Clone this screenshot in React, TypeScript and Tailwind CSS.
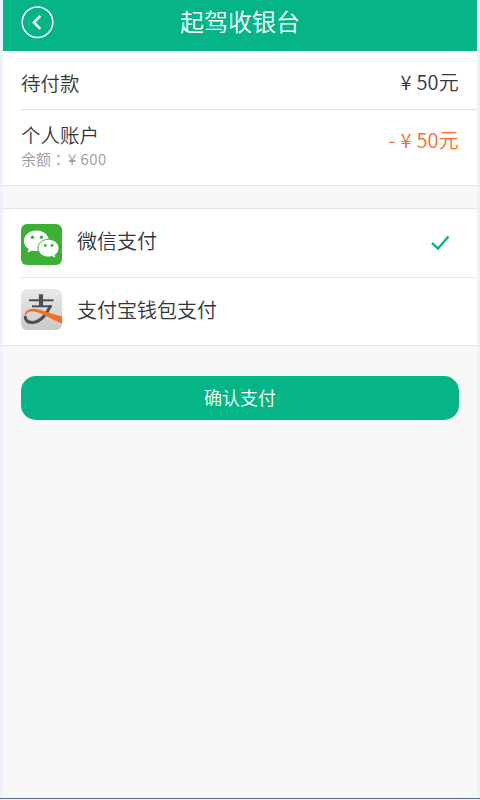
import React, { useState } from 'react';

const methods = [
  { id: 'wechat', label: '微信支付', Icon: WechatIcon },
  { id: 'alipay', label: '支付宝钱包支付', Icon: AlipayIcon },
];

function BackIcon() {
  return (
    <svg width="34" height="34" viewBox="0 0 34 34" fill="none" stroke="white">
      <circle cx="16.5" cy="17.2" r="15.3" strokeWidth="1.5" />
      <path d="M19.3 11 13 17.4 19.3 23.8" strokeWidth="2.5" />
    </svg>
  );
}

function WechatIcon() {
  return (
    <svg width="41" height="41" viewBox="0 0 41 41">
      <rect width="41" height="41" rx="6" fill="#3cb035" />
      <path
        d="M15.5 6.5C8.6 6.5 3 11.1 3 16.9c0 3.3 1.8 6.1 4.7 8L6.6 28.6l4.5-2.2c1.4.4 2.9.7 4.4.7 6.9 0 12.4-4.6 12.4-10.3S22.4 6.5 15.5 6.5z"
        fill="white"
      />
      <path
        d="M27.4 15.3c-5.8 0-10.5 4-10.5 8.9s4.7 8.9 10.5 8.9c1.3 0 2.5-.2 3.6-.5l3.9 2-.9-3.5c2.5-1.6 4-4.1 4-6.9 0-4.9-4.8-8.9-10.6-8.9z"
        fill="white"
        stroke="#3cb035"
        strokeWidth="1"
      />
      <g fill="#3cb035">
        <circle cx="11.5" cy="13.3" r="1.7" />
        <circle cx="20.4" cy="13.3" r="1.7" />
        <circle cx="24.3" cy="21.5" r="1.4" />
        <circle cx="31" cy="21.5" r="1.4" />
      </g>
    </svg>
  );
}

function AlipayIcon() {
  return (
    <svg width="41" height="41" viewBox="0 0 41 41">
      <defs>
        <linearGradient id="alipay-bg" x1="0" y1="0" x2="0" y2="1">
          <stop offset="0" stopColor="#e9e9e9" />
          <stop offset="1" stopColor="#cacaca" />
        </linearGradient>
      </defs>
      <rect width="41" height="41" rx="6" fill="url(#alipay-bg)" />
      <g fill="none" stroke="#4a5157">
        <path d="M20 5.3v12" strokeWidth="4.2" />
        <path d="M8 11.3h24.6" strokeWidth="2" />
        <path d="M11 17.3h20" strokeWidth="2" />
        <path d="M29.5 16.5C26.5 24 20 33 11.8 33.5 6.5 33.8 3.8 30.7 4.3 27" strokeWidth="3.2" />
      </g>
      <path
        d="M4.2 28.5C2.5 23.5 6 19.6 12 19.7c9 .2 15 4.5 29 7.6v7.200C29.500 30 21 23.700 12.500 22.500 7.500 21.800 4.500 24.200 4.200 28.500z"
        fill="#f8701f"
      />
    </svg>
  );
}

function CheckIcon() {
  return (
    <svg width="20" height="16" viewBox="0 0 20 16" fill="none" stroke="#05b588" strokeWidth="2.4">
      <path d="M2 7.8 8 13.5 18.5 1.5" />
    </svg>
  );
}

function Amount({ prefix, value }: { prefix?: string; value: number }) {
  return (
    <div className="flex items-center text-[20px] leading-7">
      {prefix && <span className="mr-[5px]">{prefix}</span>}
      <span className="mr-1 w-3">¥</span>
      <span className="tracking-[0.2px]">{value}元</span>
    </div>
  );
}

export default function App() {
  const [selected, setSelected] = useState('wechat');

  return (
    <div className="h-[800px] w-[480px] overflow-hidden bg-[#edf2fb] px-[3px] font-['Noto_Sans_CJK_SC',sans-serif] font-[350] text-[#333639]">
      <div className="flex h-[798px] flex-col bg-[#f8f8f8]">
        {/* Header */}
        <header className="grid h-[51px] shrink-0 grid-cols-[1fr_auto_1fr] items-start bg-[#05b588] px-[18px] text-white">
          <button aria-label="返回" className="mt-[5px] w-[34px] cursor-pointer">
            <BackIcon />
          </button>
          <h1 className="mt-[3px] text-[24px] leading-9">起驾收银台</h1>
        </header>

        {/* Order summary */}
        <section className="h-[135px] shrink-0 border-b border-[#e4e4e4] bg-white pl-[18px]">
          <div className="flex h-[59px] items-start justify-between border-b border-[#dfdfdf] pt-[17px] pr-[18px]">
            <span className="pt-px text-[19.5px] leading-7">待付款</span>
            <Amount value={50} />
          </div>
          <div className="flex justify-between pt-[11px] pr-[18px]">
            <div>
              <p className="text-[19.5px] leading-7">个人账户</p>
              <p className="flex text-[15px] leading-5 text-[#999]">
                <span>
                  余额<span className="font-['Noto_Sans_CJK_TC',sans-serif]" lang="zh-TW">：</span>
                </span>
                <span className="ml-[2px] tracking-[0.5px]">¥ 600</span>
              </p>
            </div>
            <div className="pt-[5px] text-[#f76d2b]">
              <Amount prefix="-" value={50} />
            </div>
          </div>
        </section>

        {/* Payment methods */}
        <section className="mt-[22px] shrink-0 border-y border-[#e4e4e4] bg-white pl-[18px]">
          {methods.map(({ id, label, Icon }) => (
            <button
              key={id}
              onClick={() => setSelected(id)}
              className="group flex h-[69px] w-full cursor-pointer items-start border-b border-[#e8e8e8] pt-[15px] pr-[27px] text-left last:h-[67px] last:border-b-0 last:pt-[11px]"
            >
              <Icon />
              <span className="ml-[15px] flex-1 pt-[3px] text-[20px] leading-7 group-last:pt-[7px]">{label}</span>
              {selected === id && (
                <span className="pt-[11px]">
                  <CheckIcon />
                </span>
              )}
            </button>
          ))}
        </section>

        {/* Submit */}
        <button className="mx-[18px] mt-[30px] h-11 shrink-0 cursor-pointer rounded-[15px] bg-[#05b588] pb-[2px] text-[18px] leading-7 text-white">
          确认支付
        </button>
      </div>
      <div className="-mx-[3px] h-px bg-[#5b6980]" />
    </div>
  );
}
